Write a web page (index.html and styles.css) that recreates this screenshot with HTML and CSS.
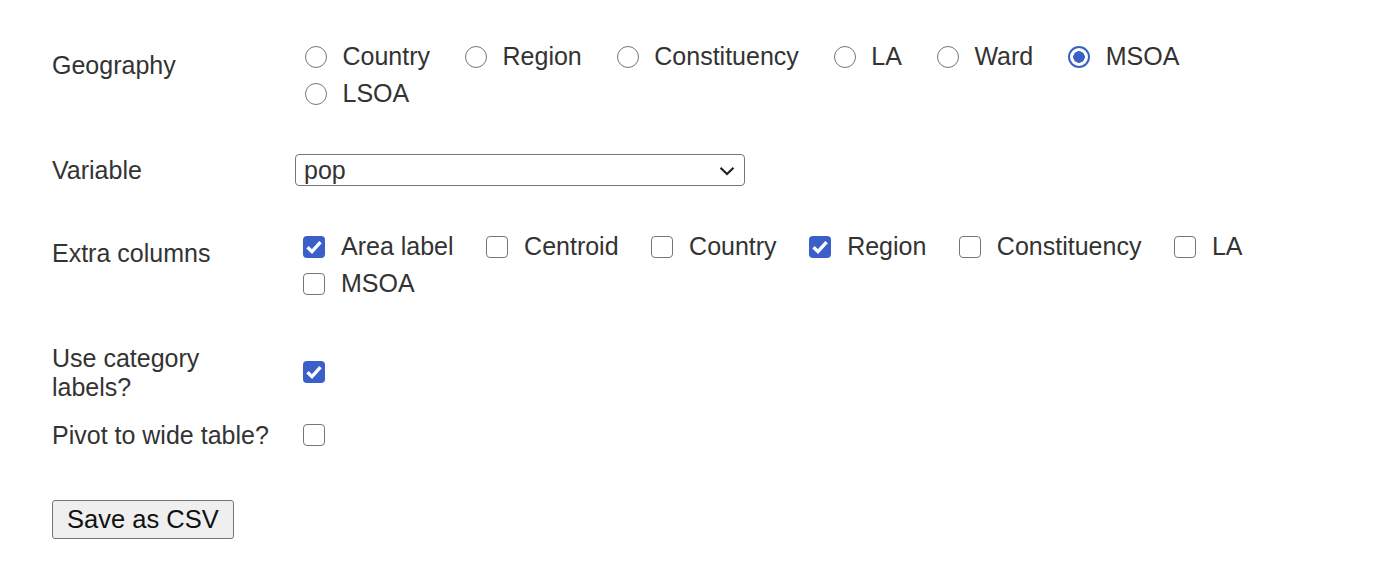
FILE: index.html
```html
<!DOCTYPE html>
<html lang="en">
<head>
<meta charset="utf-8">
<title>Download</title>
<link rel="stylesheet" href="styles.css">
</head>
<body>
<form class="form">
  <div class="row row-geo">
    <label class="label label-geo">Geography</label>
    <div class="options options-radio">
      <label class="opt radio"><input type="radio" name="geo"><span>Country</span></label>
      <label class="opt radio"><input type="radio" name="geo"><span>Region</span></label>
      <label class="opt radio"><input type="radio" name="geo"><span>Constituency</span></label>
      <label class="opt radio"><input type="radio" name="geo"><span>LA</span></label>
      <label class="opt radio"><input type="radio" name="geo"><span>Ward</span></label>
      <label class="opt radio"><input type="radio" name="geo" checked><span>MSOA</span></label>
      <label class="opt radio"><input type="radio" name="geo"><span>LSOA</span></label>
    </div>
  </div>

  <div class="row row-var">
    <label class="label">Variable</label>
    <div class="select-wrap">
      <select class="select"><option>pop</option></select>
      <svg class="chevron" width="16" height="10" viewBox="0 0 16 10"><path d="M1.5 1.8 L8 8 L14.5 1.8" fill="none" stroke="#222" stroke-width="2.2"/></svg>
    </div>
  </div>

  <div class="row row-extra">
    <label class="label label-extra">Extra columns</label>
    <div class="options options-check">
      <label class="opt check"><input type="checkbox" checked><span>Area label</span></label>
      <label class="opt check"><input type="checkbox"><span>Centroid</span></label>
      <label class="opt check"><input type="checkbox"><span>Country</span></label>
      <label class="opt check"><input type="checkbox" checked><span>Region</span></label>
      <label class="opt check"><input type="checkbox"><span>Constituency</span></label>
      <label class="opt check"><input type="checkbox"><span>LA</span></label>
      <label class="opt check"><input type="checkbox"><span>MSOA</span></label>
    </div>
  </div>

  <div class="row row-cat">
    <label class="label label-narrow">Use category labels?</label>
    <div class="single"><input class="box" type="checkbox" checked></div>
  </div>

  <div class="row row-pivot">
    <label class="label label-narrow">Pivot to wide table?</label>
    <div class="single"><input class="box" type="checkbox"></div>
  </div>

  <div class="actions">
    <button type="button" class="btn">Save as CSV</button>
  </div>
</form>
</body>
</html>
```

FILE: styles.css
```css
html, body {
  margin: 0;
  padding: 0;
  background: #ffffff;
}

body {
  font-family: "Liberation Sans", Arial, sans-serif;
  font-size: 25px;
  line-height: 29px;
  color: #333333;
}

.form {
  padding: 38px 0 0 52px;
  width: 1250px;
}

.row {
  display: grid;
  grid-template-columns: 243px 1fr;
  align-items: start;
}

.label {
  display: block;
  padding-right: 18px;
}

.label-geo {
  margin-top: 13px;
}

.label-extra {
  margin-top: 11px;
}

.options {
  display: flex;
  flex-wrap: wrap;
}

.options-radio {
  column-gap: 25px;
}

.options-check {
  column-gap: 24.5px;
}

.opt {
  display: inline-flex;
  align-items: center;
  height: 37px;
  white-space: nowrap;
}

/* custom radio */
.radio input {
  appearance: none;
  -webkit-appearance: none;
  box-sizing: border-box;
  width: 22px;
  height: 22px;
  margin: 0 15.5px 0 10px;
  border: 1.5px solid #767676;
  border-radius: 50%;
  background: #ffffff;
  flex: none;
}

.radio input:checked {
  border: 2px solid #3b5fc8;
  background: radial-gradient(circle, #3b5fc8 0 5.5px, #ffffff 6px);
}

/* custom checkbox */
.check input,
.box {
  appearance: none;
  -webkit-appearance: none;
  box-sizing: border-box;
  width: 22px;
  height: 22px;
  margin: 0 16px 0 8px;
  border: 1.5px solid #767676;
  border-radius: 4px;
  background: #ffffff;
  flex: none;
}

.check input:checked,
.box:checked {
  border-color: #3b5fc8;
  background-color: #3b5fc8;
  background-image: url("data:image/svg+xml,%3Csvg xmlns='http://www.w3.org/2000/svg' viewBox='0 0 22 22'%3E%3Cpath d='M4.5 11.2 L9 15.6 L17.5 6.2' fill='none' stroke='%23ffffff' stroke-width='3.4'/%3E%3C/svg%3E");
  background-size: 100% 100%;
  background-position: center;
  background-repeat: no-repeat;
  border: none;
}

.row-var {
  margin-top: 42px;
  align-items: center;
}

.select-wrap {
  position: relative;
  width: 450px;
  height: 32px;
}

.select {
  appearance: none;
  -webkit-appearance: none;
  width: 450px;
  height: 32px;
  margin: 0;
  padding: 0 0 0 8px;
  border: 1px solid #767676;
  border-radius: 4px;
  background: #ffffff;
  font-family: "Liberation Sans", Arial, sans-serif;
  font-size: 25px;
  color: #333333;
}

.chevron {
  position: absolute;
  right: 10px;
  top: 12px;
  pointer-events: none;
}

.row-extra {
  margin-top: 42px;
}

.row-cat {
  margin-top: 42px;
  align-items: center;
}

.row-pivot {
  margin-top: 19px;
  align-items: center;
}

.single {
  display: flex;
  align-items: center;
}

.box {
  margin: -2px 0 0 8px;
}

.actions {
  margin-top: 50px;
}

.btn {
  height: 39px;
  padding: 0 14px;
  border: 1px solid #767676;
  border-radius: 3px;
  background: #efefef;
  font-family: "Liberation Sans", Arial, sans-serif;
  font-size: 25.5px;
  color: #111111;
  line-height: 37px;
}
```
